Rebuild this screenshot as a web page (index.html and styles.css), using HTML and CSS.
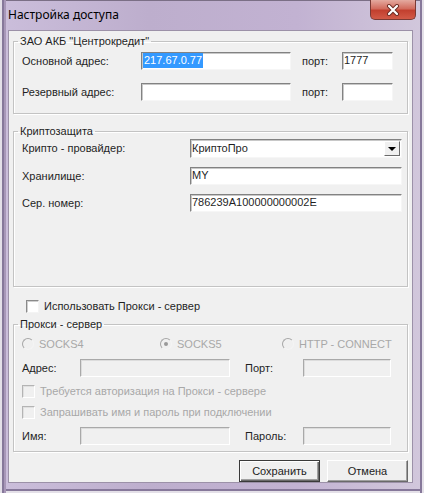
FILE: index.html
```html
<!DOCTYPE html>
<html lang="ru">
<head>
  <meta charset="UTF-8" />
  <title>Настройка доступа</title>
  <link rel="stylesheet" href="styles.css">
</head>
<body>
  <div class="window">
    <div class="titlebar">
      <span class="title">Настройка доступа</span>
      <div class="close">
        <svg width="14" height="12" viewBox="0 0 14 12">
          <path d="M3 2 L11 10 M11 2 L3 10" stroke="#6b2a22" stroke-width="4" stroke-linecap="round" fill="none"/>
          <path d="M3 2 L11 10 M11 2 L3 10" stroke="#ffffff" stroke-width="2.2" stroke-linecap="round" fill="none"/>
        </svg>
      </div>
    </div>

    <div class="client">
      <fieldset class="group group-server">
        <legend>ЗАО АКБ "Центрокредит"</legend>
        <div class="server-grid">
          <span class="label">Основной адрес:</span>
          <div class="field"><span class="selected">217.67.0.77</span></div>
          <span class="label port-label">порт:</span>
          <div class="field">1777</div>

          <span class="label">Резервный адрес:</span>
          <div class="field"></div>
          <span class="label port-label">порт:</span>
          <div class="field"></div>
        </div>
      </fieldset>

      <fieldset class="group group-crypto">
        <legend>Криптозащита</legend>
        <div class="crypto-grid">
          <span class="label">Крипто - провайдер:</span>
          <div class="field select">
            <span class="select-value">КриптоПро</span>
            <span class="select-btn"><span class="arrow"></span></span>
          </div>

          <span class="label">Хранилище:</span>
          <div class="field">MY</div>

          <span class="label">Сер. номер:</span>
          <div class="field">786239A100000000002E</div>
        </div>
      </fieldset>

      <div class="check-row use-proxy">
        <span class="checkbox"></span>
        <span class="label">Использовать Прокси - сервер</span>
      </div>

      <fieldset class="group group-proxy">
        <legend>Прокси - сервер</legend>
        <div class="proxy-body">
          <div class="radio-row">
            <div class="radio-item"><span class="radio"></span><span>SOCKS4</span></div>
            <div class="radio-item"><span class="radio checked"></span><span>SOCKS5</span></div>
            <div class="radio-item"><span class="radio"></span><span>HTTP - CONNECT</span></div>
          </div>

          <div class="proxy-grid">
            <span class="label">Адрес:</span>
            <div class="field disabled"></div>
            <span class="label port-label">Порт:</span>
            <div class="field disabled"></div>
          </div>

          <div class="check-row">
            <span class="checkbox disabled"></span>
            <span class="label muted">Требуется авторизация на Прокси - сервере</span>
          </div>

          <div class="check-row">
            <span class="checkbox disabled"></span>
            <span class="label muted">Запрашивать имя и пароль при подключении</span>
          </div>

          <div class="proxy-grid">
            <span class="label">Имя:</span>
            <div class="field disabled"></div>
            <span class="label port-label">Пароль:</span>
            <div class="field disabled"></div>
          </div>
        </div>
      </fieldset>

      <div class="buttons">
        <button class="btn btn-default">Сохранить</button>
        <button class="btn">Отмена</button>
      </div>
    </div>
  </div>
</body>
</html>
```

FILE: styles.css
```css
* {
  box-sizing: border-box;
}

body {
  margin: 0;
  width: 424px;
  height: 493px;
  background: #c6b9d4;
  font-family: "Liberation Sans", Arial, sans-serif;
  font-size: 11px;
  color: #1f1f1f;
}

.window {
  height: 493px;
  display: flex;
  flex-direction: column;
  padding: 0 11px 10px 8px;
  background: linear-gradient(to right, #cbbedb, #bdaecd 35%, #c2b2d2 70%, #d2c8dc);
  box-shadow: inset 2px 0 0 #e4e0e8, inset 4px 0 0 #86789a, inset 6px 0 0 #a897b8,
              inset -2px 0 0 #e4e0e8, inset -4px 0 0 #86789a,
              inset 0 -2px 0 #e4e0e8, inset 0 -4px 0 #86789a,
              inset 0 1px 0 #7b6f86;
}

.titlebar {
  height: 30px;
  display: flex;
  justify-content: space-between;
  align-items: flex-start;
}

.title {
  padding-top: 7px;
  font-family: "Noto Sans", "Open Sans", sans-serif;
  font-size: 12px;
  line-height: 16px;
  color: #000;
}

.close {
  width: 46px;
  height: 20px;
  margin-right: -3px;
  display: flex;
  align-items: center;
  justify-content: center;
  border: 1px solid #7a3a34;
  border-top: none;
  border-radius: 0 0 5px 5px;
  background: linear-gradient(#e4aaa0 0%, #d26c5e 45%, #c2402f 55%, #d25a47 100%);
}

.client {
  flex: 1;
  padding: 0 4px;
  background: #f0f0f0;
  border: 1px solid #9c91a8;
}

.group {
  margin: 0;
  padding: 0 0 0 8px;
  border: 1px solid #c3c3c3;
  box-shadow: inset 1px 1px 0 #fff, 1px 1px 0 #fff;
}

legend {
  margin-left: -4px;
  padding: 0 2px;
  line-height: 13px;
}

.label {
  line-height: 13px;
  white-space: nowrap;
}

.muted,
.radio-item {
  color: #a8a8a8;
}

.port-label {
  padding-left: 11px;
}

/* текстовые поля */
.field {
  height: 18px;
  padding-left: 1px;
  line-height: 15px;
  background: #fff;
  border: 1px solid;
  border-color: #828282 #f6f6f6 #f6f6f6 #828282;
  box-shadow: inset 1px 1px 0 #c8c8c8;
  white-space: nowrap;
  overflow: hidden;
}

.field.disabled {
  background: #f0f0f0;
  border-color: #a9a9a9 #fff #fff #a9a9a9;
  box-shadow: inset 1px 1px 0 #dcdcdc;
}

.selected {
  display: inline-block;
  padding: 0 1px;
  background: #3399ff;
  color: #fff;
}

.group-server {
  margin-top: 4px;
  padding-top: 4px;
  padding-bottom: 12px;
}

.server-grid {
  display: grid;
  grid-template-columns: 119px 150px 51px 51px;
  grid-auto-rows: 18px;
  row-gap: 13px;
  align-items: center;
}

.group-crypto {
  margin-top: 11px;
  padding-top: 1px;
  padding-bottom: 74px;
}

.crypto-grid {
  display: grid;
  grid-template-columns: 168px 212px;
  grid-template-rows: 19px 18px 18px;
  row-gap: 9px;
  align-items: center;
}

.select {
  height: 19px;
  display: flex;
  justify-content: space-between;
  align-items: center;
  padding-right: 1px;
}

.select-btn {
  width: 16px;
  height: 15px;
  display: flex;
  align-items: center;
  justify-content: center;
  background: #f0f0f0;
  border: 1px solid;
  border-color: #fff #6a6a6a #6a6a6a #fff;
}

.arrow {
  width: 0;
  height: 0;
  border-left: 4px solid transparent;
  border-right: 4px solid transparent;
  border-top: 4px solid #000;
}

/* флажки */
.check-row {
  height: 13px;
  display: flex;
  align-items: center;
  gap: 5px;
}

.use-proxy {
  margin-top: 13px;
  padding-left: 13px;
}

.checkbox {
  width: 13px;
  height: 13px;
  background: #fff;
  border: 1px solid;
  border-color: #8a8a8a #f4f4f4 #f4f4f4 #8a8a8a;
  box-shadow: inset 1px 1px 0 #cfcfcf;
}

.checkbox.disabled {
  background: #f0f0f0;
  border-color: #b4b4b4 #fff #fff #b4b4b4;
  box-shadow: inset 1px 1px 0 #e0e0e0;
}

.group-proxy {
  margin-top: 5px;
  padding-top: 6px;
  padding-bottom: 6px;
}

.proxy-body {
  display: flex;
  flex-direction: column;
  gap: 8px;
}

.radio-row {
  height: 14px;
  display: grid;
  grid-template-columns: 138px 122px auto;
  align-items: center;
}

.radio-item {
  display: flex;
  align-items: center;
  gap: 5px;
  line-height: 13px;
}

.radio {
  width: 12px;
  height: 12px;
  display: flex;
  align-items: center;
  justify-content: center;
  border-radius: 50%;
  border: 1px solid;
  border-color: #a6a6a6 #f4f4f4 #f4f4f4 #a6a6a6;
  background: #f0f0f0;
}

.radio.checked::after {
  content: "";
  width: 4px;
  height: 4px;
  border-radius: 50%;
  background: #9a9a9a;
}

.proxy-grid {
  display: grid;
  grid-template-columns: 58px 150px 73px 88px;
  grid-auto-rows: 18px;
  align-items: center;
}

.proxy-grid .port-label {
  padding-left: 15px;
}

/* кнопки */
.buttons {
  margin-top: 8px;
  display: flex;
  justify-content: flex-end;
  gap: 7px;
}

.btn {
  width: 81px;
  height: 22px;
  padding: 0;
  font-family: "Liberation Sans", Arial, sans-serif;
  font-size: 11px;
  color: #222;
  background: #efefef;
  border: 1px solid;
  border-color: #fff #6a6a6a #6a6a6a #fff;
  box-shadow: inset -1px -1px 0 #a0a0a0;
}

.btn-default {
  border: 1px solid #3a3a3a;
  box-shadow: inset 1px 1px 0 #fff, inset -1px -1px 0 #6a6a6a, inset -2px -2px 0 #a0a0a0;
}
```
